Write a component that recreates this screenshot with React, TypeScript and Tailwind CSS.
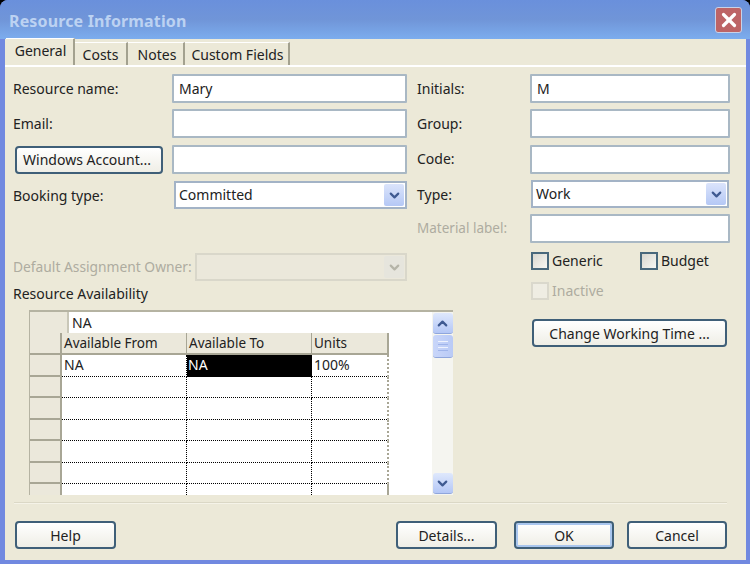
import { ChevronDown, ChevronUp, X } from "lucide-react";

const font = { fontFamily: '"Noto Sans", sans-serif' };

const TextBox = ({ value, className = "" }: { value?: string; className?: string }) => (
  <div className={`h-[29px] bg-white border-2 border-[#a9b8c4] rounded-[1px] pl-[5px] flex items-center text-[14px] text-[#222] ${className}`}>
    {value}
  </div>
);

const Combo = ({ value, className = "", disabled = false }: { value?: string; className?: string; disabled?: boolean }) => (
  <div className={`h-[28px] border-2 flex items-center justify-between pl-[3px] pr-[1px] text-[14px] text-[#222] ${disabled ? "bg-[#ebe8db] border-[#d9d7ca]" : "bg-white border-[#a3b3c6]"} ${className}`}>
    <span className="-mt-[2px]">{value}</span>
    <span className={`w-[20px] h-[22px] flex items-center justify-center rounded-[2px] ${disabled ? "bg-[#e6e5dd]" : "bg-gradient-to-b from-[#dbe4fb] to-[#b5c8f5]"}`}>
      <ChevronDown size={15} strokeWidth={3.5} className={disabled ? "text-[#b5b4a8]" : "text-[#3f5a92]"} />
    </span>
  </div>
);

const Btn = ({ label, className = "" }: { label: string; className?: string }) => (
  <button className={`h-[28px] rounded-[4px] border-2 border-[#3f5f78] bg-gradient-to-b from-white to-[#efeee6] text-[14px] text-[#222] flex items-center justify-center ${className}`}>
    {label}
  </button>
);

const Check = ({ label, disabled = false, className = "" }: { label: string; disabled?: boolean; className?: string }) => (
  <div className={`flex items-center gap-[3px] text-[14px] ${disabled ? "text-[#aeaca0]" : "text-[#222]"} ${className}`}>
    <span className={`w-[18px] h-[18px] border-2 ${disabled ? "border-[#dad8cc] bg-[#efede3]" : "border-[#48687c] bg-gradient-to-br from-[#d8d7cf] to-[#f7f7f3]"}`} />
    {label}
  </div>
);

const Tab = ({ label, active = false, className = "" }: { label: string; active?: boolean; className?: string }) => (
  <div className={`flex items-center justify-center border-r-2 border-[#a3a18f] text-[14px] text-[#222] ${active ? "h-[27px] bg-[#ece9d8] border-t border-t-white pb-[3px]" : "h-[23px] border-t border-t-white"} ${className}`}>
    {label}
  </div>
);

const ScrollBtn = ({ up = false }: { up?: boolean }) => (
  <div className="w-[20px] h-[21px] rounded-[3px] border-b border-[#8fa6dc] bg-gradient-to-b from-[#dfe8fc] to-[#b4c7f6] flex items-center justify-center">
    {up ? <ChevronUp size={15} strokeWidth={3.5} className="text-[#3f5a92]" /> : <ChevronDown size={15} strokeWidth={3.5} className="text-[#3f5a92]" />}
  </div>
);

const rows = [0, 1, 2, 3, 4, 5];

const AvailabilityGrid = () => (
  <div className="ml-[16px] mt-[6px] w-[424px] h-[185px] bg-white border-t-2 border-l border-[#b5b3a2] flex overflow-hidden text-[14px] text-[#222]">
    <div className="w-[402px] flex flex-col">
      <div className="h-[21px] flex shrink-0">
        <div className="w-[39px] bg-[#ebe8db] border-r-2 border-[#c9c7b8]" />
        <div className="pl-[3px] leading-[21px]">NA</div>
      </div>
      <div className="flex h-[22px] shrink-0 w-[359px]">
        <div className="w-[32px] bg-[#ebe8db] border-r-2 border-[#a8a695] border-b-2 border-b-[#a8a695]" />
        <div className="w-[125px] pl-[2px] bg-[#ebe8db] border-r border-[#a8a695] border-b-2 border-b-[#a8a695] leading-[20px] text-[13.5px]">Available From</div>
        <div className="w-[125px] pl-[2px] bg-[#ebe8db] border-r border-[#a8a695] border-b-2 border-b-[#a8a695] leading-[20px] text-[13.5px]">Available To</div>
        <div className="w-[77px] pl-[2px] bg-[#ebe8db] border-r-2 border-[#a8a695] border-b-2 border-b-[#a8a695] leading-[20px] text-[13.5px]">Units</div>
      </div>
      {rows.map((r) => (
        <div key={r} className="flex h-[21.5px] shrink-0 w-[359px]">
          <div className="w-[32px] bg-[#ebe8db] border-r-2 border-b-2 border-[#a8a695]" />
          <div className="w-[125px] pl-[2px] border-r border-b border-dotted border-black leading-[20px]">{r === 0 && "NA"}</div>
          <div className={`w-[125px] pl-[1px] border-r border-b border-dotted border-black leading-[20px] ${r === 0 ? "bg-black text-white" : ""}`}>{r === 0 && "NA"}</div>
          <div className="w-[77px] pl-[2px] border-r-2 border-r-[#a8a695] border-b border-dotted border-b-black leading-[20px]">{r === 0 && "100%"}</div>
        </div>
      ))}
      <div className="flex flex-1 w-[359px]">
        <div className="w-[32px] bg-[#ebe8db] border-r-2 border-[#a8a695]" />
        <div className="w-[125px] border-r border-dotted border-black" />
        <div className="w-[125px] border-r border-dotted border-black" />
        <div className="w-[77px] border-r-2 border-[#a8a695]" />
      </div>
    </div>
    <div className="w-[21px] bg-[#f5f5f0] flex flex-col items-center justify-between pt-[1px] pb-[1px]">
      <div className="flex flex-col gap-[1px]">
        <ScrollBtn up />
        <div className="w-[20px] h-[23px] rounded-[3px] border-b border-[#8fa6dc] bg-gradient-to-r from-[#c9d6f9] to-[#b9caf6] flex flex-col items-center justify-center gap-[2px]">
          <span className="w-[10px] h-[1px] bg-[#eef2fd]" />
          <span className="w-[10px] h-[1px] bg-[#9fb4ea]" />
          <span className="w-[10px] h-[1px] bg-[#eef2fd]" />
          <span className="w-[10px] h-[1px] bg-[#9fb4ea]" />
        </div>
      </div>
      <ScrollBtn />
    </div>
  </div>
);

export default function App() {
  return (
    <div className="w-[750px] h-[564px] bg-black overflow-hidden" style={font}>
      <div className="h-full rounded-t-[8px] bg-[#7189e0] flex flex-col overflow-hidden">
        <div className="h-[39px] shrink-0 flex items-center justify-between pl-[9px] pr-[8px] bg-gradient-to-b from-[#6a90dc] via-[#7095d8] to-[#7cadee]">
          <span className="text-[16px] font-bold text-[#bcd2f2] tracking-[0.15px] pt-[3px]">Resource Information</span>
          <span className="w-[27px] h-[26px] rounded-[3px] border border-[#c8d2e8] bg-[#bd6466] flex items-center justify-center">
            <X size={22} strokeWidth={3.5} className="text-white" />
          </span>
        </div>

        <div className="flex-1 ml-[5px] mr-[4px] mb-[4px] bg-[#ece9d8] flex flex-col">
          <div className="h-[28px] flex items-end border-b-2 border-white shrink-0 pl-[1px]">
            <Tab label="General" active className="w-[69px] pl-[2px]" />
            <Tab label="Costs" className="w-[53px]" />
            <Tab label="Notes" className="w-[57px] pl-[3px]" />
            <Tab label="Custom Fields" className="w-[105px] pl-[2px] text-[13.5px]" />
          </div>

          <div className="flex pl-[8px] pt-[7px] text-[14px] text-[#222]">
            <div className="w-[394px] flex flex-col">
              <div className="flex items-center">
                <span className="w-[159px]">Resource name:</span>
                <TextBox value="Mary" className="w-[235px]" />
              </div>
              <div className="flex items-center mt-[6px]">
                <span className="w-[159px]">Email:</span>
                <TextBox className="w-[235px]" />
              </div>
              <div className="flex items-center mt-[7px]">
                <Btn label="Windows Account..." className="w-[148px] h-[25px] ml-[2px] mr-[9px] pr-[4px]" />
                <TextBox className="w-[235px]" />
              </div>
              <div className="flex items-center mt-[7px]">
                <span className="w-[161px]">Booking type:</span>
                <Combo value="Committed" className="w-[233px]" />
              </div>
              <div className="flex items-center mt-[44px]">
                <span className="w-[182px] text-[#aeaca0] text-[13.8px]">Default Assignment Owner:</span>
                <Combo disabled className="w-[213px]" />
              </div>
              <div className="mt-[3px] leading-[20px]">Resource Availability</div>
              <AvailabilityGrid />
            </div>

            <div className="ml-[10px] flex flex-col">
              <div className="flex items-center">
                <span className="w-[113px]">Initials:</span>
                <TextBox value="M" className="w-[200px]" />
              </div>
              <div className="flex items-center mt-[6px]">
                <span className="w-[113px]">Group:</span>
                <TextBox className="w-[200px]" />
              </div>
              <div className="flex items-center mt-[7px]">
                <span className="w-[113px] -mt-[2px]">Code:</span>
                <TextBox className="w-[200px]" />
              </div>
              <div className="flex items-center mt-[6px]">
                <span className="w-[114px]">Type:</span>
                <Combo value="Work" className="w-[198px]" />
              </div>
              <div className="flex items-center mt-[6px]">
                <span className="w-[113px] text-[#aeaca0] text-[13.5px]">Material label:</span>
                <TextBox className="w-[200px]" />
              </div>
              <div className="flex items-center ml-[114px] mt-[7px]">
                <Check label="Generic" className="w-[109px]" />
                <Check label="Budget" />
              </div>
              <Check label="Inactive" disabled className="ml-[114px] mt-[9px]" />
              <Btn label="Change Working Time ..." className="w-[195px] h-[27px] ml-[115px] mt-[18px]" />
            </div>
          </div>

          <div className="mt-[7px] mx-[9px] w-[713px] h-[2px] bg-[#dbd8c6] border-b border-[#f5f3e8]" />

          <div className="flex items-center mt-[17px] px-[10px] w-[732px]">
            <Btn label="Help" className="w-[101px]" />
            <div className="flex-1" />
            <Btn label="Details..." className="w-[101px]" />
            <Btn label="OK" className="w-[100px] ml-[17px] border-[#3d6aa8] shadow-[inset_0_0_0_2px_#a9c6ee]" />
            <Btn label="Cancel" className="w-[100px] ml-[13px]" />
          </div>
        </div>
      </div>
    </div>
  );
}
